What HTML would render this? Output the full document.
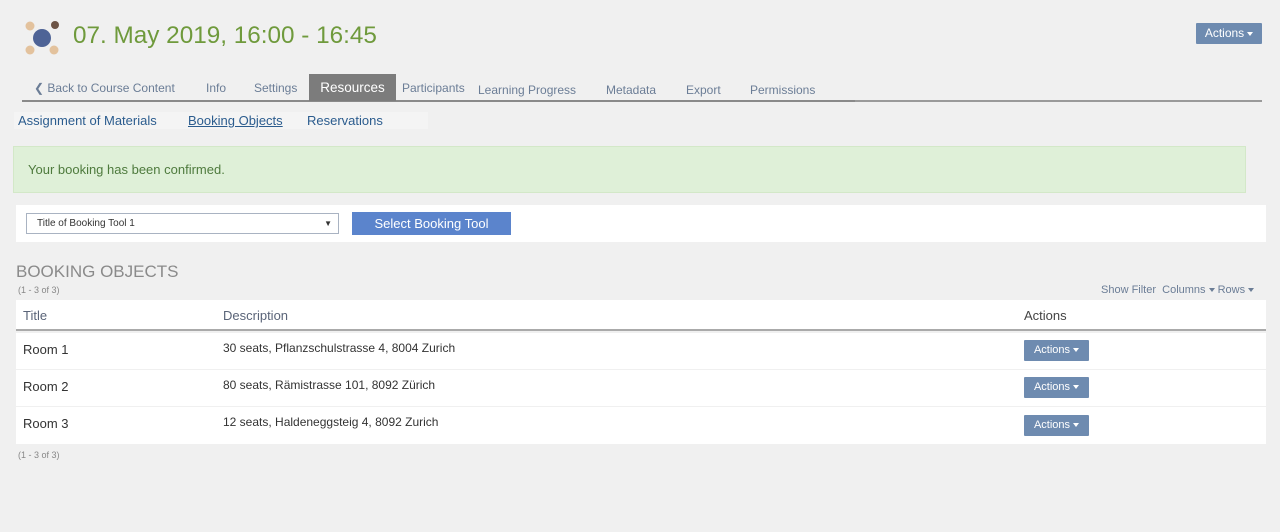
<!DOCTYPE html>
<html><head><style>
*{margin:0;padding:0;box-sizing:border-box}
body{width:1280px;height:532px;background:#f0f0f0;font-family:"Liberation Sans",sans-serif;position:relative;overflow:hidden;color:#333}
.a{position:absolute}
.tab{position:absolute;top:74px;height:27px;line-height:28px;font-size:12px;color:#6b7d96;white-space:nowrap}
.btn{position:absolute;background:#6e8bb0;color:#fff;font-size:12px;text-align:center;border-radius:1px}
.car{display:inline-block;border-left:3.5px solid transparent;border-right:3.5px solid transparent;border-top:4px solid currentColor;vertical-align:middle;margin-left:3px}
.row{position:absolute;left:16px;width:1250px;background:#fff;font-size:13px}
</style></head><body>
<svg class="a" style="left:24px;top:20px" width="36" height="36" viewBox="0 0 36 36">
<circle cx="6" cy="6" r="4.5" fill="#e3c29d"/><circle cx="31" cy="5" r="4" fill="#6d5446"/>
<circle cx="6" cy="30" r="4.5" fill="#e3c29d"/><circle cx="30" cy="30" r="4.5" fill="#e3c29d"/>
<circle cx="18" cy="18" r="9" fill="#4e6396"/></svg>
<div class="a" style="left:73px;top:22px;font-size:24.3px;color:#6f9a3c">07. May 2019, 16:00 - 16:45</div>
<div class="btn" style="left:1196px;top:23px;width:66px;height:21px;line-height:21px">Actions<span class="car"></span></div>

<div class="a" style="left:22px;top:100px;width:1240px;height:2px;background:#8a8a8a"></div>
<div class="a" style="left:855px;top:100px;width:407px;height:2px;background:#9a9a9a"></div>
<div class="tab" style="left:34px">&#10094; Back to Course Content</div>
<div class="tab" style="left:206px">Info</div>
<div class="tab" style="left:254px">Settings</div>
<div class="tab" style="left:309px;width:87px;background:#7c7c7c;color:#fff;text-align:center;font-size:13.5px">Resources</div>
<div class="tab" style="left:402px;width:64px;overflow:hidden">Participants</div>
<div class="tab" style="left:478px;top:76px">Learning Progress</div>
<div class="tab" style="left:606px;top:76px">Metadata</div>
<div class="tab" style="left:686px;top:76px">Export</div>
<div class="tab" style="left:750px;top:76px">Permissions</div>

<div class="a" style="left:14px;top:112px;width:414px;height:17px;background:#f4f4f4"></div>
<div class="a" style="left:18px;top:113px;font-size:13px;color:#2b5c8e">Assignment of Materials</div>
<div class="a" style="left:188px;top:113px;font-size:13px;color:#2b5c8e;text-decoration:underline">Booking Objects</div>
<div class="a" style="left:307px;top:113px;font-size:13px;color:#2b5c8e">Reservations</div>

<div class="a" style="left:13px;top:146px;width:1233px;height:47px;background:#dff0d8;border:1px solid #d3e8c8;font-size:13px;color:#4e7a3d;padding:15px 0 0 14px">Your booking has been confirmed.</div>

<div class="a" style="left:16px;top:205px;width:1250px;height:37px;background:#fff"></div>
<div class="a" style="left:26px;top:213px;width:313px;height:21px;border:1px solid #a9b3c2;font-size:10px;line-height:19px;padding-left:10px;color:#333">Title of Booking Tool 1<span style="position:absolute;right:6px;font-size:8px">&#9660;</span></div>
<div class="a" style="left:352px;top:212px;width:159px;height:23px;background:#5b84cc;color:#fff;font-size:13px;text-align:center;line-height:23px">Select Booking Tool</div>

<div class="a" style="left:16px;top:262px;font-size:17px;color:#8a8a8a">BOOKING OBJECTS</div>
<div class="a" style="left:18px;top:285px;font-size:9px;color:#888">(1 - 3 of 3)</div>
<div class="a" style="left:1101px;top:284px;font-size:11px;color:#6b7d96">Show Filter&nbsp; Columns<span class="car"></span> Rows<span class="car"></span></div>

<div class="row" style="top:300px;height:31px;border-bottom:2px solid #aaa;color:#5a6478"><span class="a" style="left:7px;top:8px">Title</span><span class="a" style="left:207px;top:8px">Description</span><span class="a" style="left:1008px;top:8px;color:#444">Actions</span></div>
<div class="row" style="top:333px;height:36px"><span class="a" style="left:7px;top:9px">Room 1</span><span class="a" style="left:207px;top:8px;font-size:12px">30 seats, Pflanzschulstrasse 4, 8004 Zurich</span></div>
<div class="row" style="top:370px;height:36px"><span class="a" style="left:7px;top:9px">Room 2</span><span class="a" style="left:207px;top:8px;font-size:12px">80 seats, Rämistrasse 101, 8092 Zürich</span></div>
<div class="row" style="top:407px;height:37px"><span class="a" style="left:7px;top:9px">Room 3</span><span class="a" style="left:207px;top:8px;font-size:12px">12 seats, Haldeneggsteig 4, 8092 Zurich</span></div>
<div class="btn" style="left:1024px;top:340px;width:65px;height:21px;line-height:21px;font-size:11px">Actions<span class="car"></span></div>
<div class="btn" style="left:1024px;top:377px;width:65px;height:21px;line-height:21px;font-size:11px">Actions<span class="car"></span></div>
<div class="btn" style="left:1024px;top:415px;width:65px;height:21px;line-height:21px;font-size:11px">Actions<span class="car"></span></div>
<div class="a" style="left:18px;top:450px;font-size:9px;color:#888">(1 - 3 of 3)</div>
</body></html>
